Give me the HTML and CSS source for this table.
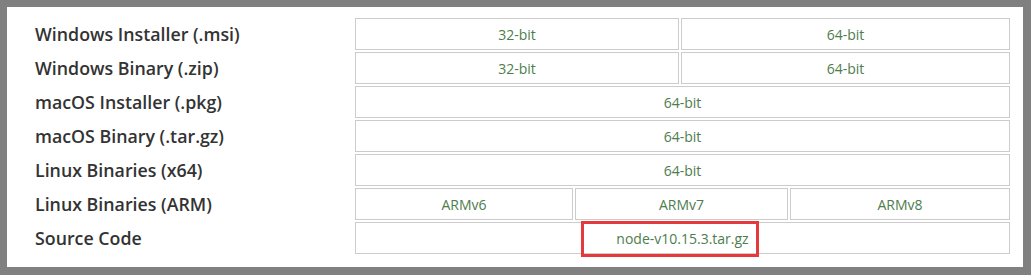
FILE: index.html
```html
<!DOCTYPE html>
<html lang="en">

<head>
    <meta charset="UTF-8">
    <meta name="viewport" content="width=device-width, initial-scale=1.0">
    <title>Downloads</title>
    <link rel="stylesheet" href="styles.css">
</head>

<body>

    <div class="frame">
        <div class="download-matrix">
            <div class="label">Windows Installer (.msi)</div>
            <div class="cell half"><a href="#">32-bit</a></div>
            <div class="cell half-r"><a href="#">64-bit</a></div>

            <div class="label">Windows Binary (.zip)</div>
            <div class="cell half"><a href="#">32-bit</a></div>
            <div class="cell half-r"><a href="#">64-bit</a></div>

            <div class="label">macOS Installer (.pkg)</div>
            <div class="cell full"><a href="#">64-bit</a></div>

            <div class="label">macOS Binary (.tar.gz)</div>
            <div class="cell full"><a href="#">64-bit</a></div>

            <div class="label">Linux Binaries (x64)</div>
            <div class="cell full"><a href="#">64-bit</a></div>

            <div class="label">Linux Binaries (ARM)</div>
            <div class="cell"><a href="#">ARMv6</a></div>
            <div class="cell arm7"><a href="#">ARMv7</a></div>
            <div class="cell"><a href="#">ARMv8</a></div>

            <div class="label">Source Code</div>
            <div class="cell full source">
                <a href="#">node-v10.15.3.tar.gz</a>
                <span class="highlight"></span>
            </div>
        </div>
    </div>

</body>

</html>
```

FILE: styles.css
```css
* {
    padding: 0;
    margin: 0;
    box-sizing: border-box;
}

body {
    background-color: #fff;
}

.frame {
    width: 1031px;
    height: 275px;
    background-color: #fff;
    border: 8px solid #808080;
    border-left-width: 7px;
    border-top-width: 7px;
    padding: 11px 13px 0 28px;
}

.download-matrix {
    display: grid;
    grid-template-columns: 318px 218fr 104fr 107fr 220fr;
    grid-auto-rows: 32px;
    gap: 2px;
}

.label {
    display: flex;
    align-items: center;
    font-family: "Open Sans", sans-serif;
    font-weight: 600;
    font-size: 17.8px;
    color: #333;
}

.cell {
    display: flex;
    align-items: center;
    justify-content: center;
    border: 1px solid #ccc;
    font-family: "Open Sans", sans-serif;
    font-size: 14px;
}

.cell a {
    color: #4d7d4d;
    text-decoration: none;
}

.half {
    grid-column: span 2;
}

.half-r {
    grid-column: span 2;
}

.full {
    grid-column: span 4;
}

.arm7 {
    grid-column: span 2;
}

.source {
    position: relative;
}

/* red box drawn over the source tarball link */
.highlight {
    position: absolute;
    left: 225px;
    top: -2px;
    width: 178px;
    height: 36px;
    border: 3px solid #e5393c;
}
```
